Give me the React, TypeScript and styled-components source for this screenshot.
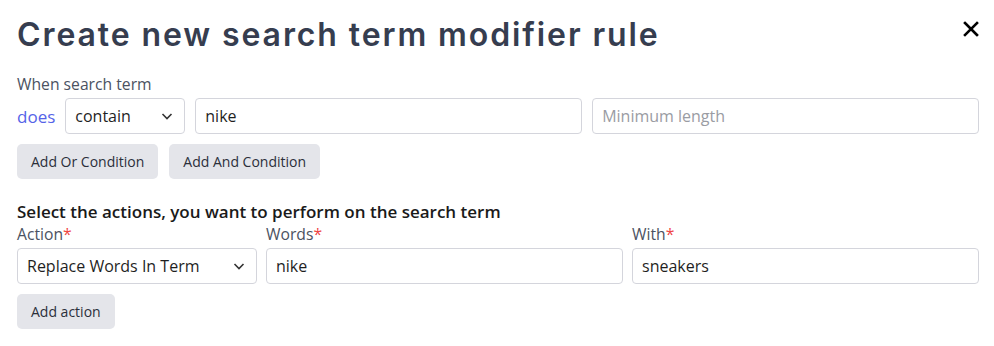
import React from "react";
import styled, { createGlobalStyle } from "styled-components";

const GlobalStyle = createGlobalStyle`
  body {
    margin: 0;
    background: #ffffff;
    font-family: "Open Sans", "Noto Sans", sans-serif;
  }
`;

const App: React.FC = () => {
  return (
    <>
      <GlobalStyle />
      <Page>
        <Header>
          <Title>Create new search term modifier rule</Title>
          <CloseButton aria-label="Close">
            <svg width="16" height="16" viewBox="0 0 16 16">
              <path d="M2 2L14 14M14 2L2 14" stroke="#000" strokeWidth="2.6" strokeLinecap="square" />
            </svg>
          </CloseButton>
        </Header>

        <Label>When search term</Label>
        <ConditionRow>
          <Does>does</Does>
          <SelectBox $width="120px">
            <span>contain</span>
            <Chevron />
          </SelectBox>
          <TextInput defaultValue="nike" />
          <TextInput placeholder="Minimum length" />
        </ConditionRow>
        <ButtonRow>
          <GrayButton>Add Or Condition</GrayButton>
          <GrayButton>Add And Condition</GrayButton>
        </ButtonRow>

        <SectionTitle>Select the actions, you want to perform on the search term</SectionTitle>
        <ActionGrid>
          <Field>
            <Label>Action<Req>*</Req></Label>
            <SelectBox>
              <span>Replace Words In Term</span>
              <Chevron />
            </SelectBox>
          </Field>
          <Field>
            <Label>Words<Req>*</Req></Label>
            <TextInput defaultValue="nike" />
          </Field>
          <Field>
            <Label>With<Req>*</Req></Label>
            <TextInput defaultValue="sneakers" />
          </Field>
        </ActionGrid>
        <ButtonRow>
          <GrayButton>Add action</GrayButton>
        </ButtonRow>
      </Page>
    </>
  );
};

const Chevron: React.FC = () => (
  <svg width="14" height="14" viewBox="0 0 14 14">
    <path d="M2.5 5L7 9.5L11.5 5" fill="none" stroke="#333" strokeWidth="1.6" />
  </svg>
);

export default App;

const Page = styled.div`
  padding: 14px 15px 0 17px;
  width: 962px;
`;

const Header = styled.div`
  display: flex;
  align-items: flex-start;
  justify-content: space-between;
  margin-bottom: 18px;
`;

const Title = styled.h1`
  margin: 0;
  font-family: "Inter", sans-serif;
  font-weight: 600;
  font-size: 32px;
  line-height: 42px;
  letter-spacing: 1.9px;
  color: #363d4f;
`;

const CloseButton = styled.button`
  border: none;
  background: none;
  padding: 0;
  margin-top: 7px;
  display: flex;
  cursor: pointer;
`;

const Label = styled.div`
  font-size: 15.7px;
  line-height: 20px;
  color: #4b5262;
`;

const Req = styled.span`
  color: #ef4444;
`;

const ConditionRow = styled.div`
  display: flex;
  align-items: center;
  gap: 10px;
  margin-top: 4px;
`;

const Does = styled.span`
  font-size: 17px;
  color: #5563e8;
`;

const SelectBox = styled.div<{ $width?: string }>`
  box-sizing: border-box;
  width: ${(p) => p.$width ?? "100%"};
  flex-shrink: 0;
  height: 36px;
  border: 1px solid #d4d5dc;
  border-radius: 4px;
  display: flex;
  align-items: center;
  justify-content: space-between;
  padding: 0 10px 0 9px;
  font-size: 16px;
  color: #1f1f1f;
  background: #fff;
`;

const TextInput = styled.input`
  box-sizing: border-box;
  flex: 1;
  width: 100%;
  min-width: 0;
  height: 36px;
  border: 1px solid #d4d5dc;
  border-radius: 4px;
  padding: 0 9px;
  font-family: "Open Sans", "Noto Sans", sans-serif;
  font-size: 16px;
  color: #1f1f1f;
  outline: none;
  &::placeholder {
    color: #9a9ca3;
  }
`;

const ButtonRow = styled.div`
  display: flex;
  gap: 11px;
  margin-top: 10px;
`;

const GrayButton = styled.button`
  height: 35px;
  padding: 0 14px;
  border: none;
  border-radius: 5px;
  background: #e4e5ea;
  font-family: "Open Sans", "Noto Sans", sans-serif;
  font-size: 14px;
  color: #2b2f3a;
  cursor: pointer;
`;

const SectionTitle = styled.div`
  margin-top: 23px;
  font-size: 17px;
  line-height: 20px;
  font-weight: 600;
  color: #1a1a1a;
`;

const ActionGrid = styled.div`
  display: grid;
  grid-template-columns: 240px 357px 1fr;
  column-gap: 9px;
  margin-top: 2px;
`;

const Field = styled.div`
  display: flex;
  flex-direction: column;
  gap: 4px;
`;
